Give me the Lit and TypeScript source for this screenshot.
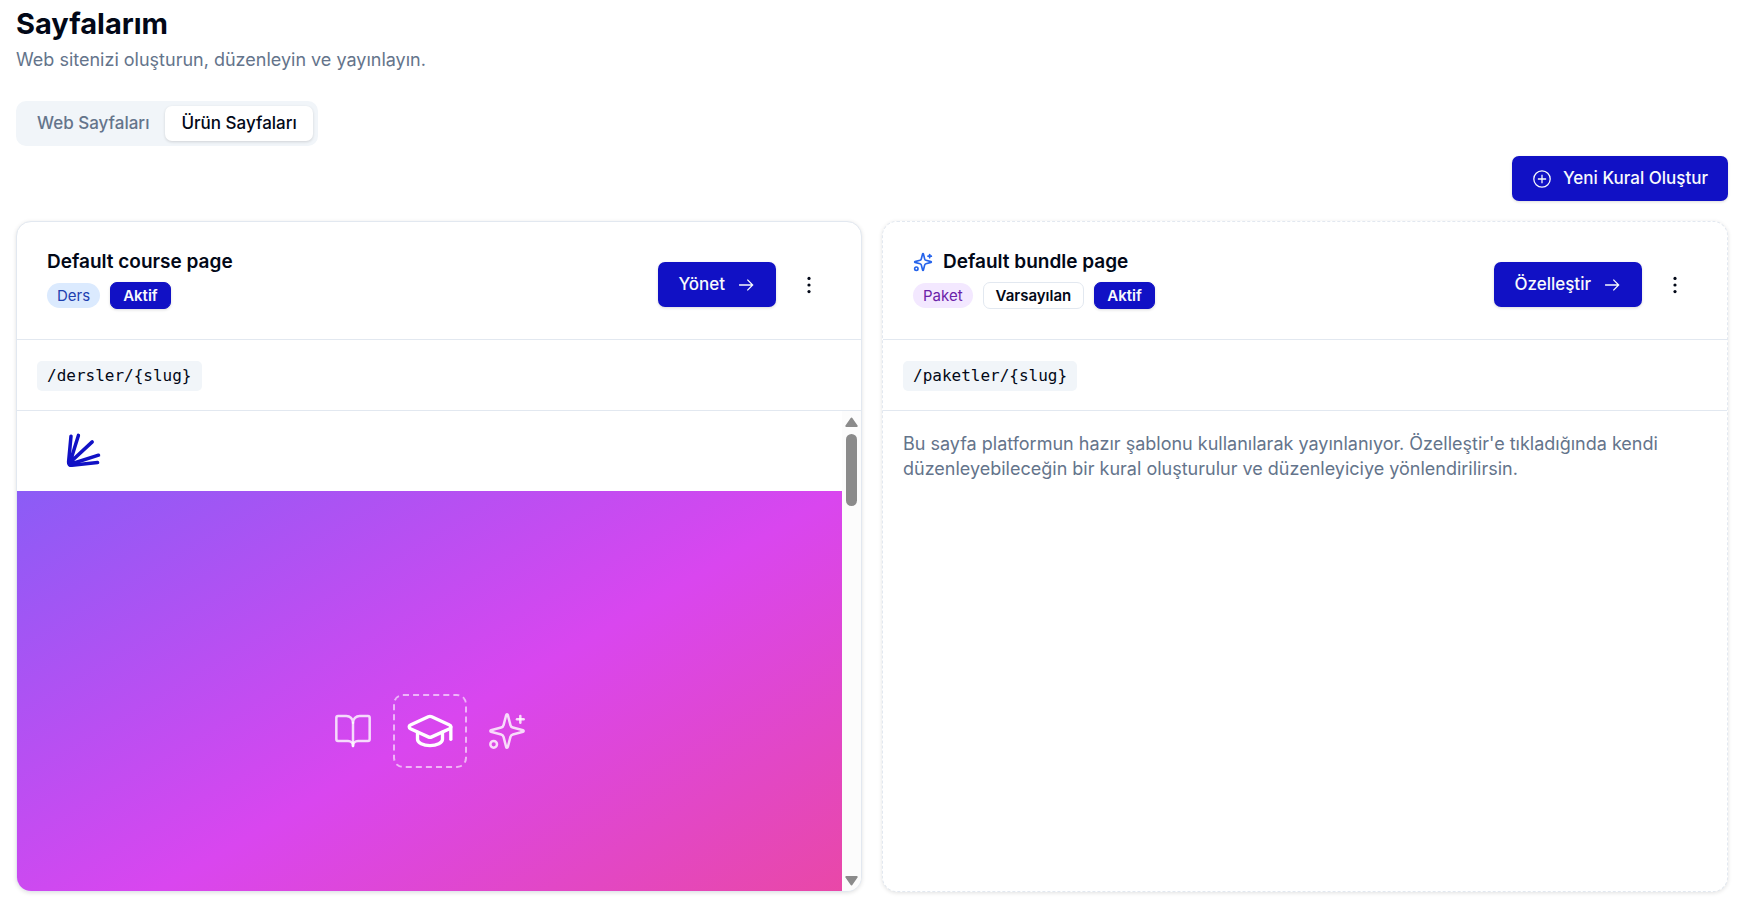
import { LitElement, html, css, svg, nothing } from "lit";
import { customElement, property } from "lit/decorators.js";

const sparkles = svg`
  <path d="M9.937 15.5A2 2 0 0 0 8.5 14.063l-6.135-1.582a.5.5 0 0 1 0-.962L8.5 9.936A2 2 0 0 0 9.937 8.5l1.582-6.135a.5.5 0 0 1 .963 0L14.063 8.5A2 2 0 0 0 15.5 9.937l6.135 1.581a.5.5 0 0 1 0 .964L15.5 14.063a2 2 0 0 0-1.437 1.437l-1.582 6.135a.5.5 0 0 1-.963 0z"/>
  <path d="M20 3v4"/><path d="M22 5h-4"/><circle cx="4" cy="20" r="2"/>`;
const arrowRight = svg`<path d="M2.3 7.5h10.4M8.5 3.5l4 4-4 4"/>`;
const plusCircle = svg`<circle cx="7.5" cy="7.5" r="6.15"/><path d="M7.5 4.4v6.2M4.4 7.5h6.2"/>`;
const bookOpen = svg`<path d="M12 7v14"/><path d="M3 18a1 1 0 0 1-1-1V4a1 1 0 0 1 1-1h5a4 4 0 0 1 4 4 4 4 0 0 1 4-4h5a1 1 0 0 1 1 1v13a1 1 0 0 1-1 1h-6a3 3 0 0 0-3 3 3 3 0 0 0-3-3z"/>`;
const graduationCap = svg`<path d="M21.42 10.922a1 1 0 0 0-.019-1.838L12.83 5.18a2 2 0 0 0-1.66 0L2.6 9.08a1 1 0 0 0 0 1.832l8.57 3.908a2 2 0 0 0 1.66 0z"/><path d="M22 10v6"/><path d="M6 12.5V16a6 3 0 0 0 12 0v-3.5"/>`;

const shared = css`
  :host, *, *::before, *::after { box-sizing: border-box; }
  h1, h2, p { margin: 0; }
  button { font: inherit; border: 0; cursor: pointer; }
  svg { display: block; flex: none; fill: none; stroke: currentColor; stroke-linecap: round; stroke-linejoin: round; }
  .primary {
    display: inline-flex; align-items: center; gap: 11px;
    height: 45px; padding: 0 20px; border-radius: 7px;
    background: #1111c5; color: #f8fafc;
    font-size: 17px; font-weight: 500; white-space: nowrap;
    box-shadow: 0 1px 3px rgb(0 0 0 / 0.14);
  }
  .thin { width: 20px; height: 20px; stroke-width: 0.95; stroke-linecap: butt; stroke-linejoin: miter; }
`;

@customElement("course-preview")
export class CoursePreview extends LitElement {
  static styles = [shared, css`
    :host { display: flex; height: 480px; }
    .view { flex: 1; min-width: 0; overflow: hidden; }
    .top { height: 80px; padding: 20px 48px; }
    .logo { width: 40px; height: 40px; color: #1111c5; stroke-width: 3.5; }
    .hero {
      display: flex; align-items: center; justify-content: center; gap: 20px; height: 480px;
      background: linear-gradient(to bottom right, #8b5cf6, #d946ef, #ec4899);
      color: rgb(255 255 255 / 0.8);
    }
    .side { width: 40px; height: 40px; stroke-width: 1.5; }
    .side, .cap { overflow: visible; }
    .frame { padding: 10px; border: 2px dashed rgb(255 255 255 / 0.6); border-radius: 10px; color: #fff; }
    .cap { width: 50px; height: 50px; stroke-width: 1.6; }
    .scroll {
      display: flex; flex-direction: column; align-items: center;
      width: 19px; padding: 6px 0 5px; background: #fcfcfc; color: #8b8b8b;
    }
    .tri { width: 13px; height: 10px; fill: currentColor; stroke-width: 2; }
    .thumb { width: 11px; height: 72px; margin: 7px 0 auto; border-radius: 6px; background: #8b8b8b; }
  `];

  render() {
    return html`
      <div class="view">
        <div class="top">
          <svg class="logo" viewBox="65 431 40 40" aria-hidden="true">
            <path d="M71 436.2 68.6 462Q68.4 465.6 72 465.3L97.6 462.6"/>
            <path d="M78.4 435.4 70 462.5 92.2 441.9M71 464 98.5 455.2"/>
          </svg>
        </div>
        <div class="hero">
          <svg class="side" viewBox="0 0 24 24" aria-hidden="true">${bookOpen}</svg>
          <div class="frame"><svg class="cap" viewBox="0 0 24 24" aria-hidden="true">${graduationCap}</svg></div>
          <svg class="side" viewBox="0 0 24 24" aria-hidden="true">${sparkles}</svg>
        </div>
      </div>
      <div class="scroll" aria-hidden="true">
        <svg class="tri" viewBox="0 0 13 10"><path d="M6.5 1.5 11.7 9H1.3z"/></svg>
        <div class="thumb"></div>
        <svg class="tri" viewBox="0 0 13 10"><path d="M6.5 8.5 11.7 1H1.3z"/></svg>
      </div>`;
  }
}

@customElement("page-card")
export class PageCard extends LitElement {
  @property() name = "";
  @property() kind = "";
  @property() path = "";
  @property() action = "";
  @property({ type: Boolean, reflect: true }) preset = false;

  static styles = [shared, css`
    :host {
      display: block; overflow: hidden; min-width: 0;
      border: 1px solid #e2e8f0; border-radius: 15px; background: #fff;
      box-shadow: 0 1px 4px rgb(0 0 0 / 0.12);
    }
    :host([preset]) { border-style: dashed; }
    .head {
      display: flex; justify-content: space-between; align-items: flex-start;
      padding: 30px; border-bottom: 1px solid #e2e8f0;
    }
    .title { display: flex; align-items: center; gap: 10px; height: 20px; }
    .title h2 { font-size: 19px; line-height: 20px; font-weight: 600; }
    .spark { width: 20px; height: 20px; color: #2563eb; stroke-width: 2; }
    .badges { display: flex; align-items: center; gap: 10px; margin-top: 10px; height: 27px; }
    .kind {
      padding: 0 10px; border-radius: 13px; font-size: 15px; line-height: 25px;
      background: #dbeafe; color: #1e40af;
    }
    :host([preset]) .kind { background: #f3e8ff; color: #6b21a8; }
    .tag {
      padding: 0 12px; border: 1px solid #e2e8f0; border-radius: 7px;
      font-size: 15px; line-height: 25px; font-weight: 600;
    }
    .on { border-color: #1111c5; background: #1111c5; color: #f8fafc; box-shadow: 0 1px 3px rgb(0 0 0 / 0.14); }
    .actions { display: flex; gap: 10px; height: 45px; margin-top: 10px; }
    .more {
      display: flex; align-items: center; justify-content: center;
      width: 45px; height: 45px; padding: 0; background: none; color: inherit;
    }
    .dots { width: 20px; height: 20px; fill: currentColor; stroke: none; }
    .route { padding: 21px 20px 19px; border-bottom: 1px solid #e2e8f0; }
    .route code {
      display: inline-block; padding: 0 10px; border-radius: 5px; background: #f1f5f9;
      font: 16px/30px "DejaVu Sans Mono", monospace; vertical-align: top;
    }
    .note { padding: 20px; font-size: 18px; line-height: 25px; color: #64748b; }
  `];

  render() {
    return html`
      <div class="head">
        <div>
          <div class="title">
            ${this.preset ? html`<svg class="spark" viewBox="0 0 24 24" aria-hidden="true">${sparkles}</svg>` : nothing}
            <h2>${this.name}</h2>
          </div>
          <div class="badges">
            <span class="kind">${this.kind}</span>
            ${this.preset ? html`<span class="tag">Varsayılan</span>` : nothing}
            <span class="tag on">Aktif</span>
          </div>
        </div>
        <div class="actions">
          <button class="primary" type="button">${this.action}<svg class="thin" viewBox="0 0 15 15" aria-hidden="true">${arrowRight}</svg></button>
          <button class="more" type="button" aria-haspopup="menu">
            <svg class="dots" viewBox="0 0 20 20" aria-hidden="true">
              <circle cx="10" cy="3.4" r="1.6"/><circle cx="10" cy="10" r="1.6"/><circle cx="10" cy="16.6" r="1.6"/>
            </svg>
          </button>
        </div>
      </div>
      <div class="route"><code>${this.path}</code></div>
      ${this.preset
        ? html`<p class="note">Bu sayfa platformun hazır şablonu kullanılarak yayınlanıyor. Özelleştir'e tıkladığında kendi düzenleyebileceğin bir kural oluşturulur ve düzenleyiciye yönlendirilirsin.</p>`
        : html`<course-preview></course-preview>`}`;
  }
}

@customElement("app-root")
export class AppRoot extends LitElement {
  static styles = [shared, css`
    :host {
      display: block; padding: 5px 15px 8px 16px;
      background: #fff; color: #020817;
      font: 18px/25px Inter, "Noto Sans", sans-serif;
    }
    h1 { font-size: 29px; line-height: 38px; font-weight: 700; }
    .sub { margin-top: 4px; color: #64748b; line-height: 25px; }
    .tabs {
      display: inline-flex; height: 45px; margin-top: 29px; padding: 5px;
      border-radius: 10px; background: #f1f5f9; vertical-align: top;
    }
    .tab {
      padding: 0 16px; border-radius: 7px; background: none; color: #64748b;
      font-size: 17px; font-weight: 500; white-space: nowrap;
    }
    .tab[aria-selected="true"] { background: #fff; color: #020817; box-shadow: 0 1px 3px rgb(0 0 0 / 0.14); }
    .bar { display: flex; justify-content: flex-end; margin: 10px 0 20px; }
    .grid { display: grid; grid-template-columns: 1fr 1fr; gap: 20px; }
  `];

  render() {
    return html`
      <main>
        <h1>Sayfalarım</h1>
        <p class="sub">Web sitenizi oluşturun, düzenleyin ve yayınlayın.</p>
        <div class="tabs" role="tablist">
          <button class="tab" type="button" role="tab" aria-selected="false">Web Sayfaları</button>
          <button class="tab" type="button" role="tab" aria-selected="true">Ürün Sayfaları</button>
        </div>
        <div class="bar">
          <button class="primary" type="button"><svg class="thin" viewBox="0 0 15 15" aria-hidden="true">${plusCircle}</svg>Yeni Kural Oluştur</button>
        </div>
        <div class="grid">
          <page-card name="Default course page" kind="Ders" path="/dersler/{slug}" action="Yönet"></page-card>
          <page-card preset name="Default bundle page" kind="Paket" path="/paketler/{slug}" action="Özelleştir"></page-card>
        </div>
      </main>`;
  }
}
